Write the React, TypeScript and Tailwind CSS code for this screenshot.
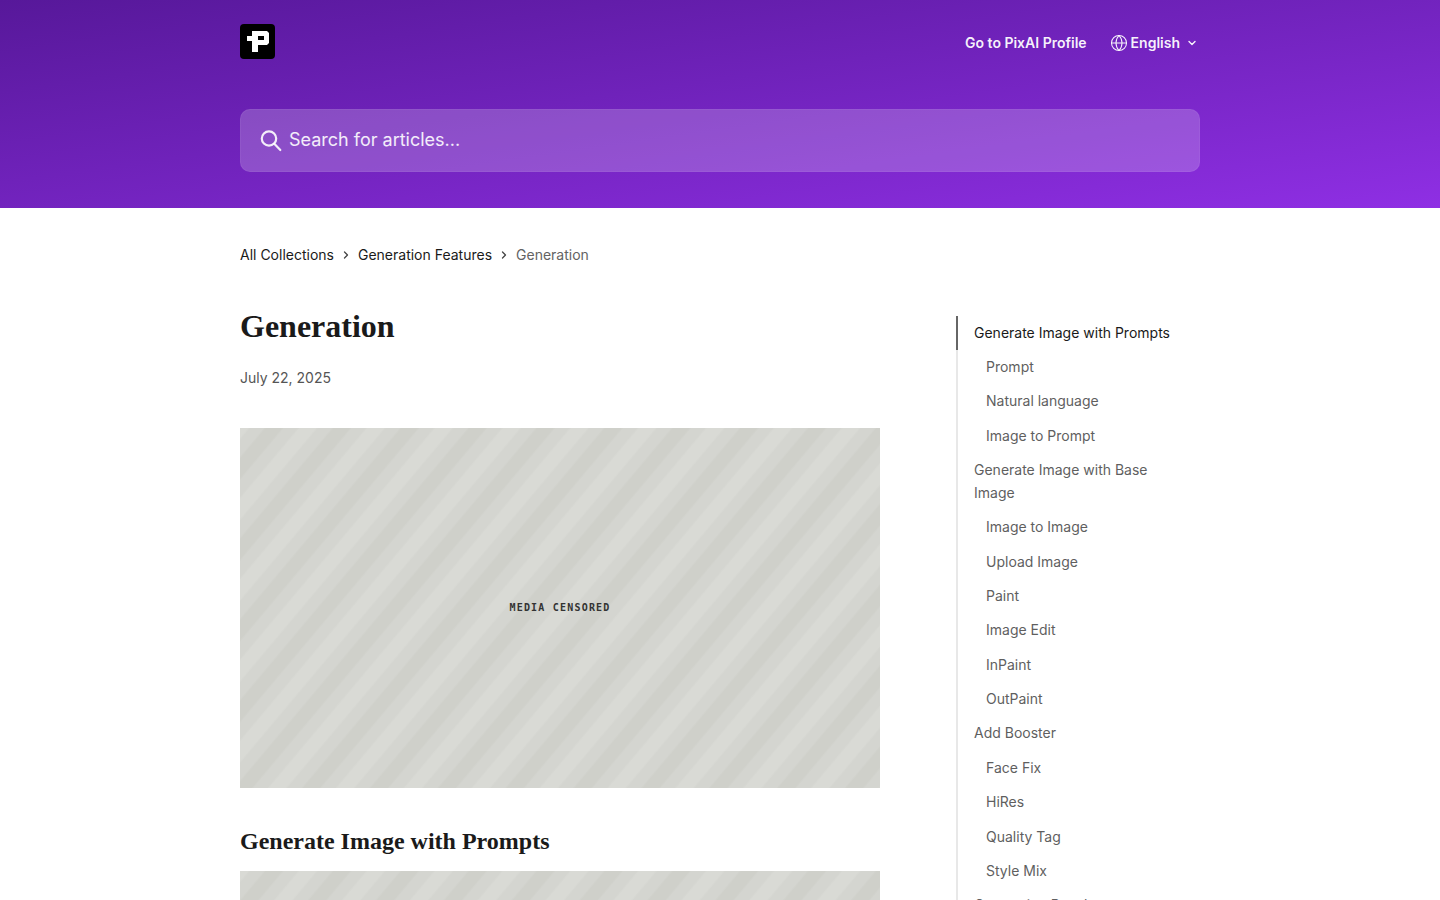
import { ChevronDown, ChevronRight, Globe } from 'lucide-react';

const tocItems = [
  { label: 'Generate Image with Prompts', level: 0, active: true },
  { label: 'Prompt', level: 1 },
  { label: 'Natural language', level: 1 },
  { label: 'Image to Prompt', level: 1 },
  { label: 'Generate Image with Base Image', level: 0 },
  { label: 'Image to Image', level: 1 },
  { label: 'Upload Image', level: 1 },
  { label: 'Paint', level: 1 },
  { label: 'Image Edit', level: 1 },
  { label: 'InPaint', level: 1 },
  { label: 'OutPaint', level: 1 },
  { label: 'Add Booster', level: 0 },
  { label: 'Face Fix', level: 1 },
  { label: 'HiRes', level: 1 },
  { label: 'Quality Tag', level: 1 },
  { label: 'Style Mix', level: 1 },
  { label: 'Generation Panel', level: 0 },
];

function Logo() {
  return (
    <svg width="35" height="35" viewBox="0 0 35 35" aria-label="PixAI">
      <rect width="35" height="35" rx="4" fill="#000" />
      <path
        fillRule="evenodd"
        d="M12 7H27L29 9V19L27 21H18V28H12V17H7V12H12ZM18 12V16H24V12Z"
        fill="#fff"
      />
    </svg>
  );
}

function SearchIcon() {
  return (
    <svg width="22" height="22" viewBox="0 0 22 22" fill="none" stroke="currentColor" strokeWidth="2.2" className="mr-[7px]">
      <circle cx="9" cy="8.5" r="7.2" />
      <path d="M14.3 13.8L20.3 20" strokeLinecap="round" />
    </svg>
  );
}

function Censored({ className }: { className: string }) {
  return (
    <div
      className={`flex w-[640px] items-center justify-center bg-[repeating-linear-gradient(130deg,#d9dad5_0px,#d9dad5_6px,#d4d5d0_8px,#d4d5d0_18px,#cfd0ca_20px,#cfd0ca_32px,#d4d5d0_34px,#d4d5d0_44px,#d9dad5_46px,#d9dad5_52px)] pb-[2px] ${className}`}
    >
      <span className="font-['DejaVu_Sans_Mono',monospace] text-[10px] font-bold tracking-[1.2px] text-[#333]">
        MEDIA CENSORED
      </span>
    </div>
  );
}

export default function App() {
  return (
    <div className="h-[900px] overflow-hidden bg-white font-['Inter',sans-serif] text-[#1a1a1a]">
      <header className="h-[208px] bg-gradient-to-br from-[#57189a] to-[#8f2fe4]">
        <div className="mx-auto w-[960px]">
          <div className="flex h-[85px] items-start justify-between pt-6">
            <Logo />
            <div className="flex items-center gap-6 pt-[9px] text-sm font-semibold text-white/95">
              <span>Go to PixAI Profile</span>
              <div className="flex items-center">
                <Globe size={18} strokeWidth={1.4} className="-ml-[1px] mr-[3px]" />
                <span>English</span>
                <ChevronDown size={12} strokeWidth={2.75} className="ml-1.5 mr-0.5" />
              </div>
            </div>
          </div>
          <div className="mt-6 flex h-[63px] items-center rounded-[10px] border border-white/5 bg-white/20 pl-[19px] text-white/90">
            <SearchIcon />
            <span className="pb-0.5 text-lg">Search for articles...</span>
          </div>
        </div>
      </header>

      <main className="mx-auto w-[960px]">
        <nav className="flex h-[94px] items-center pb-[1px] text-sm">
          <span>All Collections</span>
          <ChevronRight size={12} strokeWidth={2.5} className="mx-1.5 text-[#444]" />
          <span>Generation Features</span>
          <ChevronRight size={12} strokeWidth={2.5} className="mx-1.5 text-[#444]" />
          <span className="text-[#636363]">Generation</span>
        </nav>

        <div className="mt-[6px] flex items-start justify-between">
          <article className="w-[640px]">
            <h1 className="font-['Liberation_Serif',serif] text-[32px] leading-[36px] font-bold">Generation</h1>
            <p className="mt-6 text-sm leading-5 text-[#555]">July 22, 2025</p>
            <Censored className="mt-10 h-[360px]" />
            <h2 className="mt-[38px] font-['Liberation_Serif',serif] text-2xl leading-[30px] font-bold">
              Generate Image with Prompts
            </h2>
            <Censored className="mt-[15px] h-[360px]" />
          </article>

          <aside className="mt-[7.7px] w-[244px] border-l-2 border-[#e8e8e8]">
            {tocItems.map((item) => (
              <div
                key={item.label}
                className={`-ml-[2px] border-l-2 pr-6 text-sm leading-[22.4px] ${
                  item.active ? 'border-[#666] text-[#1a1a1a]' : 'border-transparent text-[#5f5f5f]'
                } ${item.level === 1 ? 'py-[6px] pl-7' : 'pt-[5.9px] pb-[6.1px] pl-4'}`}
              >
                {item.label}
              </div>
            ))}
          </aside>
        </div>
      </main>
    </div>
  );
}
